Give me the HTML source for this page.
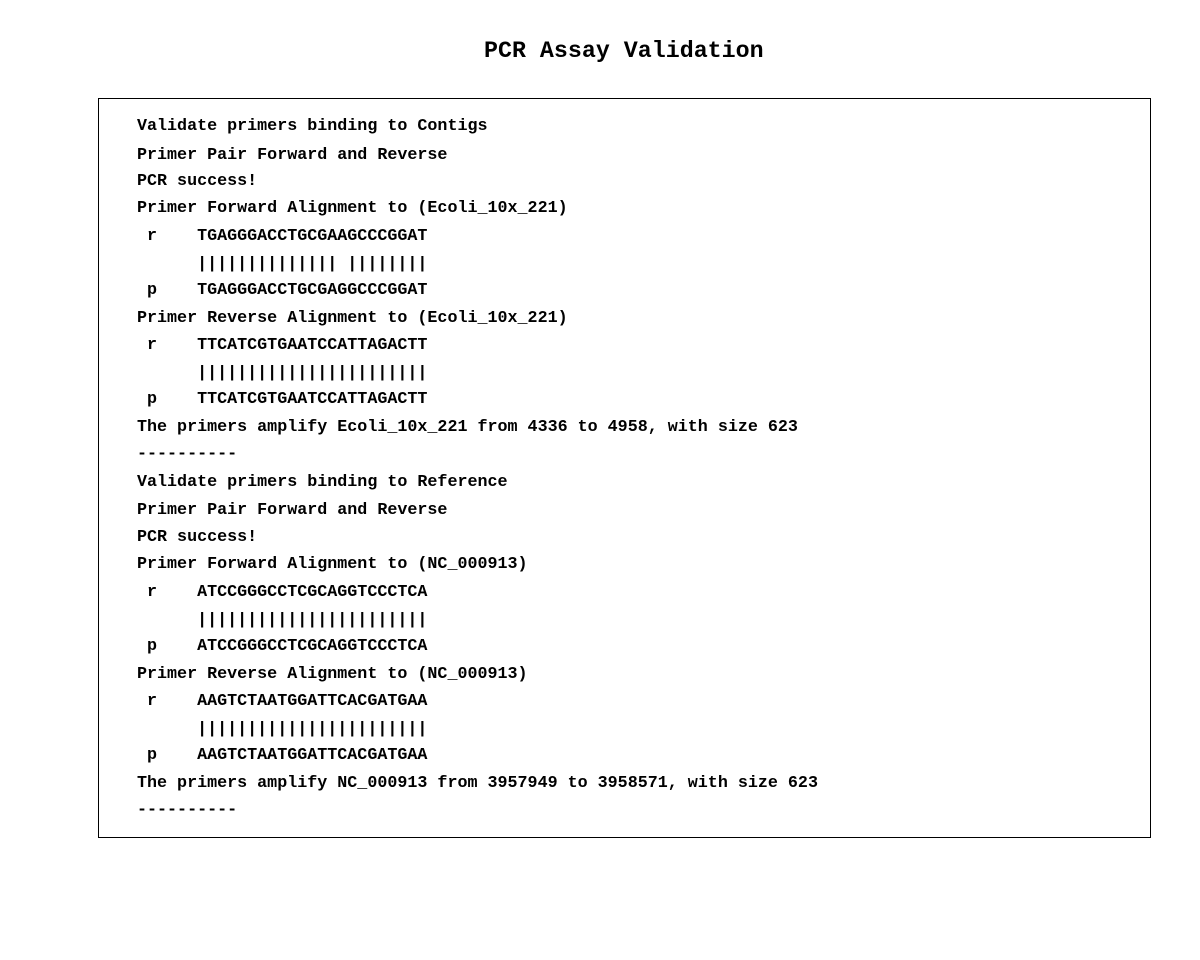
<!DOCTYPE html>
<html><head><meta charset="utf-8"><style>
html,body{margin:0;padding:0;background:#fff;width:1200px;height:960px;overflow:hidden;position:relative}
.t{position:absolute;left:484px;top:36px;font:bold 23.3px/30px "Liberation Mono",monospace;color:#000;white-space:pre}
.box{position:absolute;left:98px;top:98px;width:1053px;height:740px;border:1px solid #000;box-sizing:border-box}
.l{position:absolute;left:137px;font:bold 16.7px/20px "Liberation Mono",monospace;color:#000;white-space:pre}
</style></head><body>
<div class="t">PCR Assay Validation</div>
<div class="box"></div>
<div class="l" style="top:117px">Validate primers binding to Contigs</div>
<div class="l" style="top:146px">Primer Pair Forward and Reverse</div>
<div class="l" style="top:172px">PCR success!</div>
<div class="l" style="top:199px">Primer Forward Alignment to (Ecoli_10x_221)</div>
<div class="l" style="top:227px"> r    TGAGGGACCTGCGAAGCCCGGAT</div>
<div class="l" style="top:255px">      |||||||||||||| ||||||||</div>
<div class="l" style="top:281px"> p    TGAGGGACCTGCGAGGCCCGGAT</div>
<div class="l" style="top:309px">Primer Reverse Alignment to (Ecoli_10x_221)</div>
<div class="l" style="top:336px"> r    TTCATCGTGAATCCATTAGACTT</div>
<div class="l" style="top:364px">      |||||||||||||||||||||||</div>
<div class="l" style="top:390px"> p    TTCATCGTGAATCCATTAGACTT</div>
<div class="l" style="top:418px">The primers amplify Ecoli_10x_221 from 4336 to 4958, with size 623</div>
<div class="l" style="top:445px">----------</div>
<div class="l" style="top:473px">Validate primers binding to Reference</div>
<div class="l" style="top:501px">Primer Pair Forward and Reverse</div>
<div class="l" style="top:528px">PCR success!</div>
<div class="l" style="top:555px">Primer Forward Alignment to (NC_000913)</div>
<div class="l" style="top:583px"> r    ATCCGGGCCTCGCAGGTCCCTCA</div>
<div class="l" style="top:611px">      |||||||||||||||||||||||</div>
<div class="l" style="top:637px"> p    ATCCGGGCCTCGCAGGTCCCTCA</div>
<div class="l" style="top:665px">Primer Reverse Alignment to (NC_000913)</div>
<div class="l" style="top:692px"> r    AAGTCTAATGGATTCACGATGAA</div>
<div class="l" style="top:720px">      |||||||||||||||||||||||</div>
<div class="l" style="top:746px"> p    AAGTCTAATGGATTCACGATGAA</div>
<div class="l" style="top:774px">The primers amplify NC_000913 from 3957949 to 3958571, with size 623</div>
<div class="l" style="top:801px">----------</div>
</body></html>
